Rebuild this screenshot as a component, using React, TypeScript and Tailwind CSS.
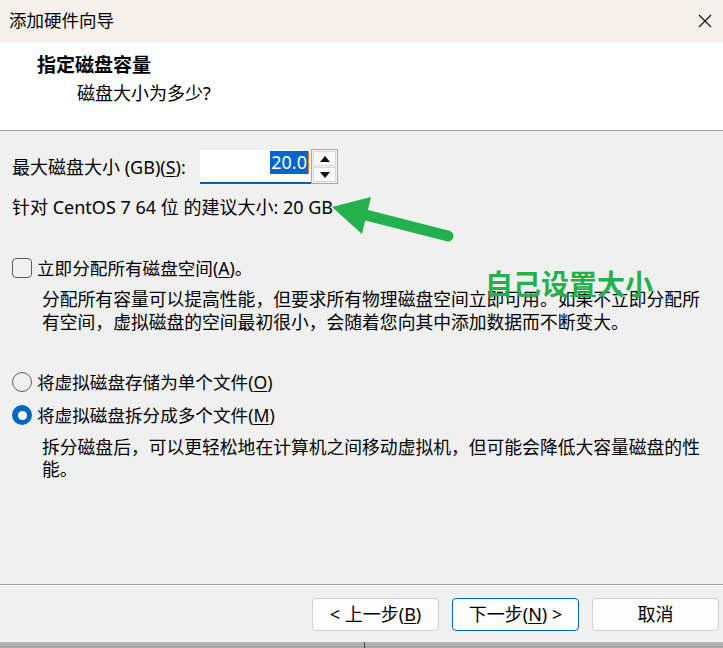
import React from "react";

const uiFont = {
  fontFamily: '"Noto Sans", "Noto Sans CJK SC", sans-serif',
};

const Key = ({ k }: { k: string }) => (
  <>
    (<span className="underline underline-offset-2">{k}</span>)
  </>
);

const Button = ({
  children,
  primary,
}: {
  children: React.ReactNode;
  primary?: boolean;
}) => (
  <button
    className={
      primary
        ? "w-[127px] h-[33px] rounded-[4px] border border-[#0067c0] bg-[#fdfdfd] text-[18px] text-black"
        : "w-[127px] h-[33px] rounded-[4px] border border-[#d1d1d1] bg-[#fdfdfd] text-[18px] text-black"
    }
  >
    {children}
  </button>
);

export default function App() {
  return (
    <div
      className="relative w-[723px] h-[648px] overflow-hidden bg-[#f0f0f0] flex flex-col text-black"
      style={uiFont}
    >
      {/* title bar */}
      <div className="h-[42px] shrink-0 bg-[#f8f1eb] flex items-center justify-between pl-[9px] pr-[11px]">
        <span className="text-[17.5px] leading-none">添加硬件向导</span>
        <svg width="14" height="14" viewBox="0 0 14 14">
          <path d="M1 1 L13 13 M13 1 L1 13" stroke="#1a1a1a" strokeWidth="1.3" />
        </svg>
      </div>

      {/* header */}
      <div className="h-[88px] shrink-0 bg-white pt-[11px]">
        <div className="pl-[37px] text-[19px] font-bold leading-[24px]">指定磁盘容量</div>
        <div className="pl-[77px] mt-[4px] text-[18px] leading-[24px]">磁盘大小为多少?</div>
      </div>
      <div className="h-px shrink-0 bg-[#a0a0a0]" />

      {/* body */}
      <div className="flex-1 px-3 text-[17.6px]">
        <div className="mt-[18px] h-[35px] flex items-center">
          <span className="w-[188px] leading-[24px] text-[18px]">
            最大磁盘大小 (GB)<Key k="S" />:
          </span>
          <div className="flex items-stretch h-[35px]">
            <div className="w-[111px] h-[34px] mt-px bg-white border-b-2 border-[#005fb8] flex items-start justify-end pt-px pr-[2px]">
              <span className="bg-[#0066cc] text-white leading-[23px] px-[1px] text-[18px]">20.0</span>
              <span className="w-px h-[23px] bg-[#e07b1a]" />
            </div>
            <div className="w-[27px] border border-[#a9a9a9] flex flex-col bg-[#f0f0f0]">
              <div className="flex-1 m-px border border-[#d9d9d9] bg-[#f9f9f9] flex items-center justify-center">
                <svg width="10" height="6" viewBox="0 0 10 6">
                  <path d="M0 6 L5 0 L10 6 Z" fill="#111" />
                </svg>
              </div>
              <div className="flex-1 mx-px mb-px border border-[#d9d9d9] bg-[#f9f9f9] flex items-center justify-center">
                <svg width="10" height="6" viewBox="0 0 10 6">
                  <path d="M0 0 L5 6 L10 0 Z" fill="#111" />
                </svg>
              </div>
            </div>
          </div>
        </div>

        <div className="mt-[11px] leading-[24px] text-[18px]">针对 CentOS 7 64 位 的建议大小: 20 GB</div>

        <div className="mt-[37px] h-[24px] flex items-center">
          <span className="w-[20px] h-[20px] rounded-[4px] border border-[#5d5d5d]" />
          <span className="ml-[5px] leading-[24px]">
            立即分配所有磁盘空间<Key k="A" />。
          </span>
        </div>
        <p className="mt-[8px] ml-[30px] w-[662px] text-[17.8px] leading-[23px]">
          分配所有容量可以提高性能，但要求所有物理磁盘空间立即可用。如果不立即分配所有空间，虚拟磁盘的空间最初很小，会随着您向其中添加数据而不断变大。
        </p>

        <div className="mt-[36px] h-[24px] flex items-center">
          <span className="w-[20px] h-[20px] rounded-full border border-[#5d5d5d]" />
          <span className="ml-[5px] leading-[24px]">
            将虚拟磁盘存储为单个文件<Key k="O" />
          </span>
        </div>
        <div className="mt-[9px] h-[24px] flex items-center">
          <span className="w-[20px] h-[20px] rounded-full bg-[#0067c0] flex items-center justify-center">
            <span className="w-[9px] h-[9px] rounded-full bg-white" />
          </span>
          <span className="ml-[5px] leading-[24px]">
            将虚拟磁盘拆分成多个文件<Key k="M" />
          </span>
        </div>
        <p className="mt-[9px] ml-[30px] w-[662px] text-[17.8px] leading-[22px]">
          拆分磁盘后，可以更轻松地在计算机之间移动虚拟机，但可能会降低大容量磁盘的性能。
        </p>
      </div>

      {/* footer */}
      <div className="h-px shrink-0 bg-[#a0a0a0]" />
      <div className="h-[57px] shrink-0 border-t border-white flex justify-end items-start pt-[12px] pr-[4px] gap-[13px]">
        <Button>
          &lt; 上一步<Key k="B" />
        </Button>
        <Button primary>
          下一步<Key k="N" /> &gt;
        </Button>
        <Button>取消</Button>
      </div>
      <div className="h-[6px] shrink-0 bg-gradient-to-b from-[#b8b8b8] to-[#a4a4a4] flex">
        <div className="ml-[364px] w-px bg-[#444]" />
      </div>

      {/* annotation overlay */}
      <svg
        className="absolute left-[320px] top-[190px]"
        width="140"
        height="60"
        viewBox="0 0 140 60"
      >
        <path d="M128 46 L34 22" stroke="#22b14c" strokeWidth="11" strokeLinecap="round" />
        <path d="M12 17 L51 7 L42 44 Z" fill="#22b14c" />
      </svg>
      <div
        className="absolute left-[485px] top-[268px] text-[28px] leading-[30px] font-bold text-[#22b14c]"
        style={{ fontFamily: '"Noto Sans CJK SC", sans-serif' }}
      >
        自己设置大小
      </div>
    </div>
  );
}
